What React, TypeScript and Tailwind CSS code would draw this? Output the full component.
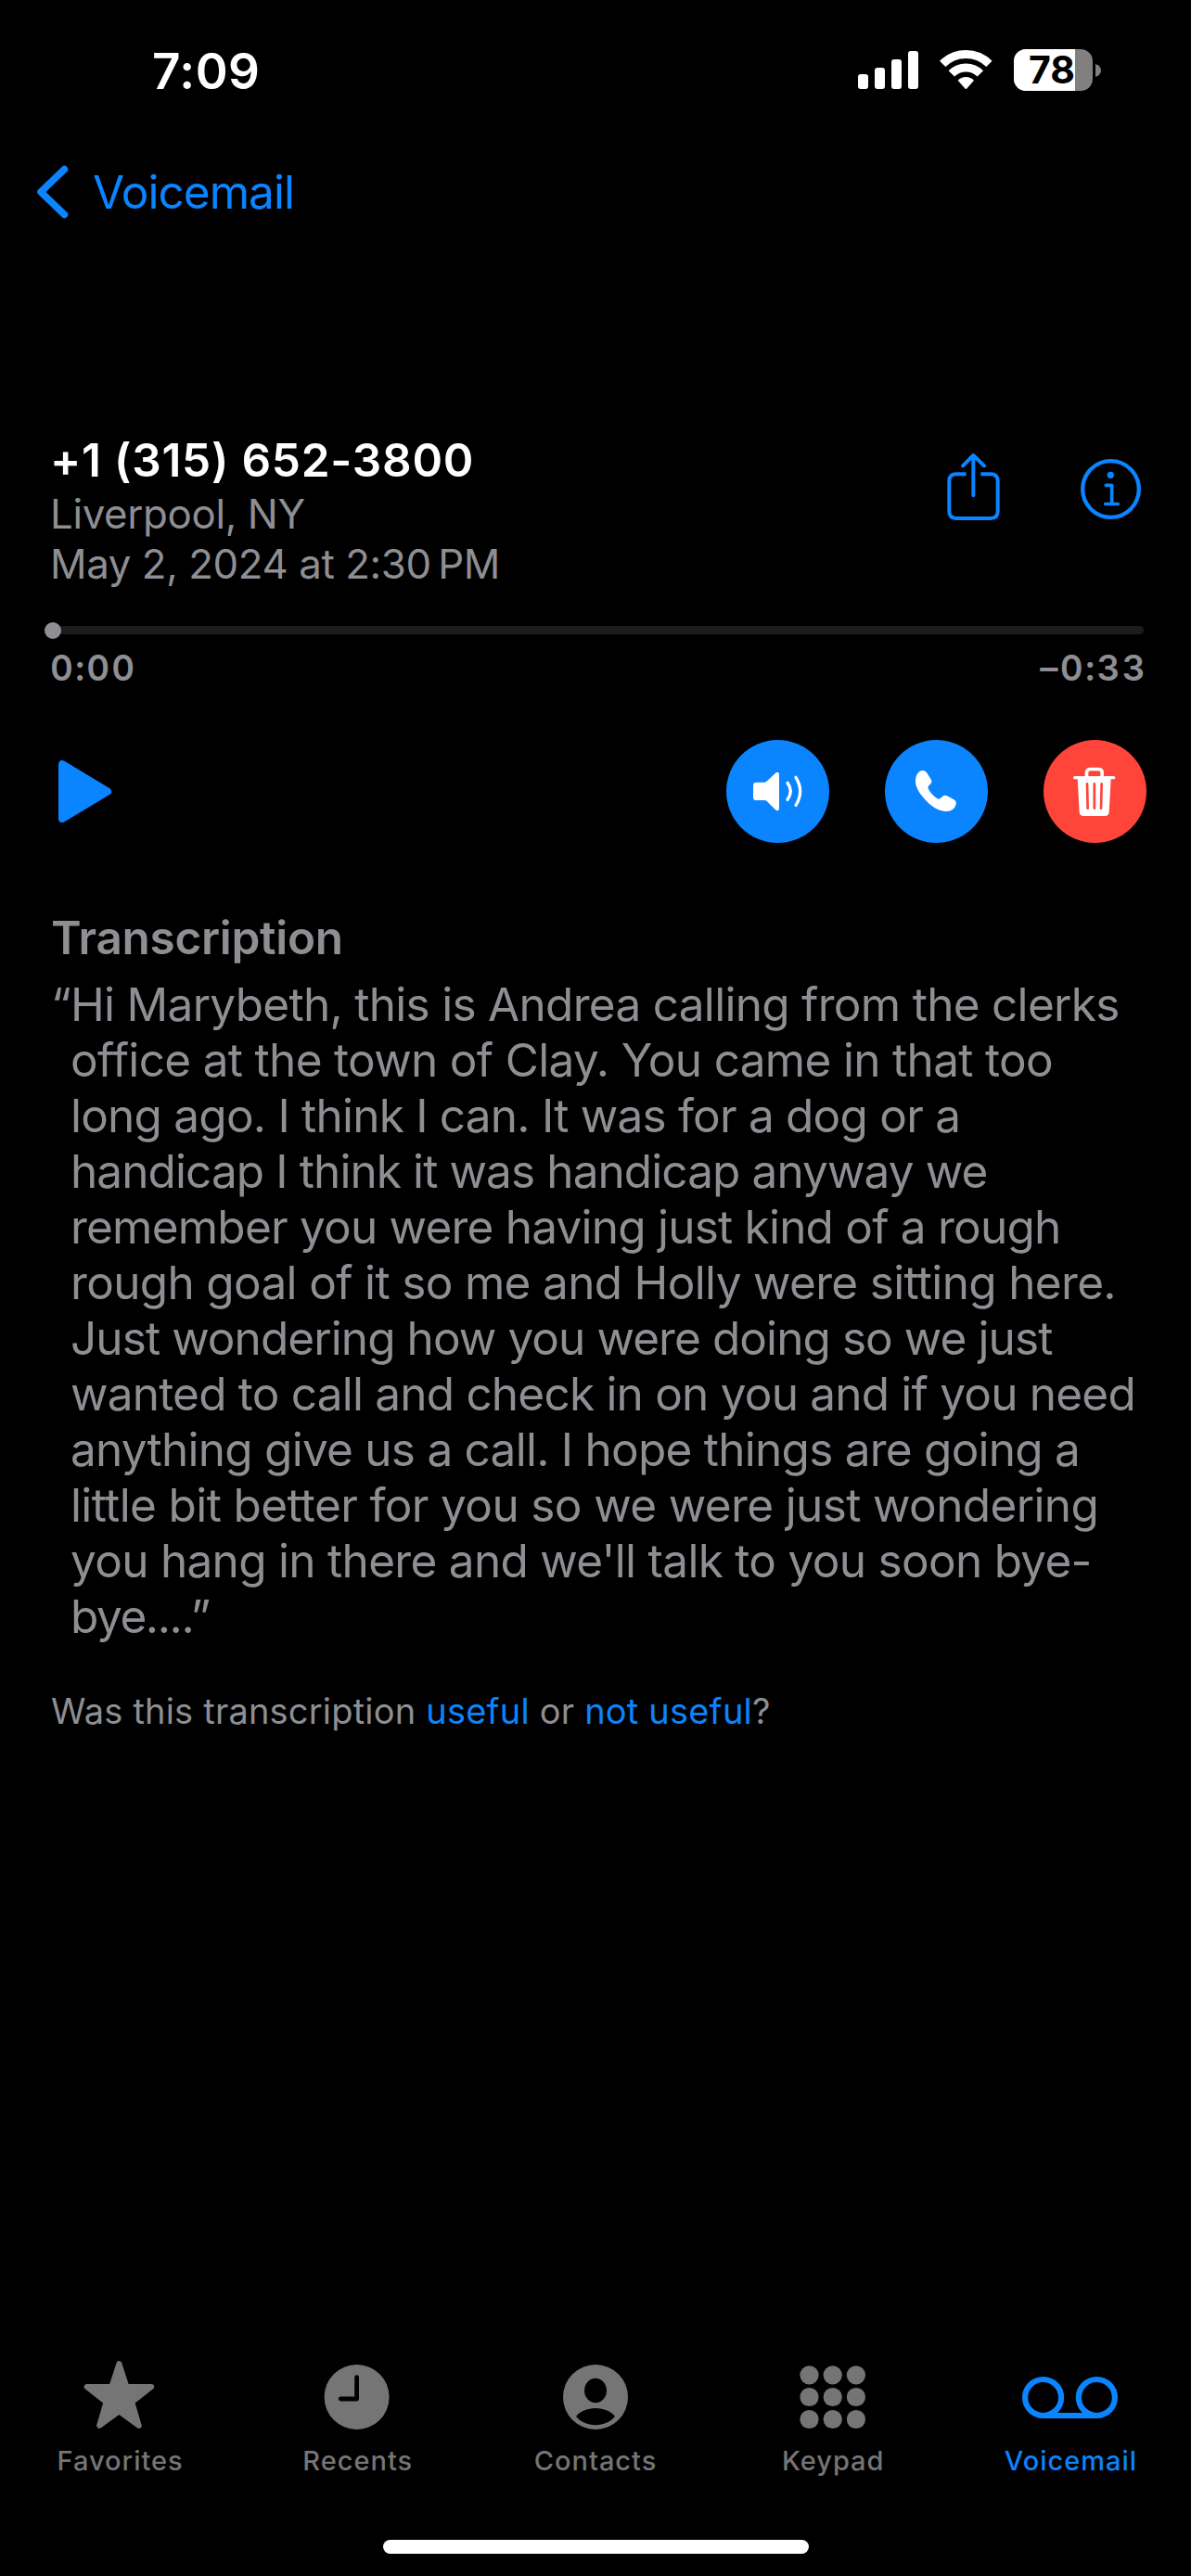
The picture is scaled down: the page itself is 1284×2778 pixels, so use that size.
import React from 'react';

type Line = { text: string; tracking: string };

const transcript: Line[] = [
  { text: 'Hi Marybeth, this is Andrea calling from the clerks', tracking: 'tracking-[-0.71px]' },
  { text: 'office at the town of Clay. You came in that too', tracking: 'tracking-[-0.68px]' },
  { text: 'long ago. I think I can. It was for a dog or a', tracking: 'tracking-[-0.78px]' },
  { text: 'handicap I think it was handicap anyway we', tracking: 'tracking-[-0.9px]' },
  { text: 'remember you were having just kind of a rough', tracking: 'tracking-[-0.78px]' },
  { text: 'rough goal of it so me and Holly were sitting here.', tracking: 'tracking-[-0.67px]' },
  { text: 'Just wondering how you were doing so we just', tracking: 'tracking-[-0.92px]' },
  { text: 'wanted to call and check in on you and if you need', tracking: 'tracking-[-0.79px]' },
  { text: 'anything give us a call. I hope things are going a', tracking: 'tracking-[-0.75px]' },
  { text: 'little bit better for you so we were just wondering', tracking: 'tracking-[-0.62px]' },
  { text: "you hang in there and we'll talk to you soon bye-", tracking: 'tracking-[-0.7px]' },
  { text: 'bye....”', tracking: 'tracking-[-1.4px]' },
];

const StarIcon = () => (
  <svg className="w-[110px] h-20" viewBox="0.6 0 110 80" fill="currentColor" stroke="currentColor" strokeWidth="6" strokeLinejoin="round">
    <path d="M55 5.2L63 30H89.8L68.8 46.3L76.3 71.8L55 56.3L33.7 71.8L41.2 46.3L20.2 30H47Z" />
  </svg>
);

const ClockIcon = () => (
  <svg className="w-[110px] h-20" viewBox="0.4 0 110 80" fill="none">
    <circle cx="55" cy="41" r="35" fill="currentColor" />
    <path d="M55 19.7V43H37.7" stroke="black" strokeWidth="4.8" strokeLinecap="round" strokeLinejoin="round" />
  </svg>
);

const ContactIcon = () => (
  <svg className="w-[110px] h-20" viewBox="0 0 110 80" fill="black">
    <circle cx="55" cy="41" r="35" fill="currentColor" />
    <ellipse cx="55" cy="34" rx="12" ry="13.2" />
    <path d="M34 62C38 56.5 46 53 55 53S72 56.5 76 62C71 68 63.5 71.2 55 71.2S39 68 34 62Z" />
  </svg>
);

const KeypadIcon = () => (
  <svg className="w-[110px] h-20" viewBox="0 0 110 80" fill="currentColor">
    {[17.3, 41, 65].map((cy) =>
      [29.5, 54.7, 79.9].map((cx) => <circle key={`${cx}-${cy}`} cx={cx} cy={cy} r="10.1" />)
    )}
  </svg>
);

const VoicemailIcon = () => (
  <svg className="w-[110px] h-20" viewBox="0 0 110 80" fill="none" stroke="currentColor" strokeWidth="6.2">
    <circle cx="25.6" cy="41.5" r="19.5" />
    <circle cx="83.4" cy="41.5" r="19.5" />
    <path d="M25.6 61H83.4" />
  </svg>
);

const tabs = [
  { label: 'Favorites', icon: StarIcon },
  { label: 'Recents', icon: ClockIcon },
  { label: 'Contacts', icon: ContactIcon },
  { label: 'Keypad', icon: KeypadIcon },
  { label: 'Voicemail', icon: VoicemailIcon, active: true },
];

const StatusBar: React.FC = () => (
  <header className="flex h-[154px] items-center justify-between pl-[164px] pr-[97px]">
    <span className="text-[53px] leading-none font-semibold tracking-[0.5px]">7:09</span>
    <div className="mb-[3px] flex items-center">
      <svg className="w-[65px] h-[45px]" viewBox="0 0 65 45" fill="currentColor">
        <rect x="0" y="27" width="11" height="16" rx="3" />
        <rect x="18" y="20" width="11" height="23" rx="3" />
        <rect x="36" y="11" width="11" height="32" rx="3" />
        <rect x="54" y="2" width="11" height="41" rx="3" />
      </svg>
      <svg className="ml-[22px] w-[59px] h-[45px]" viewBox="336 69 177 135" fill="none" stroke="currentColor">
        <path d="M348.7 116.7A106.5 106.5 0 0 1 499.3 116.7" strokeWidth="27" />
        <path d="M377.3 148.3A66 66 0 0 1 470.7 148.3" strokeWidth="27" />
        <path d="M398 170A37 37 0 0 1 450 170L426 197Q424 199 422 197Z" fill="currentColor" stroke="none" />
      </svg>
      <div className="ml-[22px] flex h-[45px] w-[85px] rounded-[13px] bg-[#808080]">
        <div className="flex w-[66px] items-center justify-end rounded-l-[13px] bg-white">
          <span className="text-[41px] leading-[45px] font-bold text-black">78</span>
        </div>
      </div>
      <svg className="ml-[3px] w-[6px] h-[14px]" viewBox="0 0 6 14" fill="#808080">
        <path d="M0 0Q6 2 6 7T0 14Z" />
      </svg>
    </div>
  </header>
);

const CallerInfo: React.FC = () => (
  <section className="flex items-start justify-between pr-[53px]">
    <div className="pl-[54px]">
      <h1 className="text-[49.5px] leading-[60px] font-semibold tracking-[0.75px]">+1 (315) 652-3800</h1>
      <p className="mt-[2px] text-[43.8px] leading-[54px] tracking-[-0.35px] text-[#8e8e93]">Liverpool, NY</p>
      <p className="text-[43.8px] leading-[54px] tracking-[-0.4px] text-[#8e8e93]">May 2, 2024 at 2:30{'\u2009'}PM</p>
    </div>
    <div className="flex items-start gap-[85px] pt-[22px] text-[#0a84ff]">
      <svg className="w-[59px] h-[75px]" viewBox="122 84 177 225" fill="none" stroke="currentColor" strokeWidth="12" strokeLinecap="round" strokeLinejoin="round">
        <path d="M187 153.500H155Q132 153.500 132 176V274Q132 297 155 297H266Q289 297 289 274V176Q289 153.500 266 153.500H234" strokeLinecap="butt" />
        <path d="M210 94V223M176 127L210 93L245 127" />
      </svg>
      <svg className="mt-[6px] w-[67px] h-[67px]" viewBox="552 102 201 201" fill="none" stroke="currentColor" strokeLinecap="round" strokeLinejoin="round">
        <circle cx="652.5" cy="202.500" r="91" strokeWidth="13" />
        <circle cx="652" cy="157" r="11" fill="currentColor" stroke="none" />
        <path d="M637 190H656V250M635 250.500H676" strokeWidth="11" />
      </svg>
    </div>
  </section>
);

const Scrubber: React.FC = () => (
  <section className="mt-[39px] pr-[51px] text-[#8e8e93]">
    <div className="relative ml-[57px] h-[9px] rounded-full bg-[#1c1c1c]">
      <div className="absolute top-[-4px] left-[-9px] h-[18px] w-[18px] rounded-full bg-[#8e8e93]" />
    </div>
    <div className="mt-[13px] flex justify-between pl-[54px] text-[38.5px] leading-[46px] font-semibold tabular-nums">
      <span className="tracking-[2px]">0:00</span>
      <span className="-mr-1 tracking-[2.3px]">–0:33</span>
    </div>
  </section>
);

const Controls: React.FC = () => (
  <section className="mt-[55px] flex items-center justify-between pl-[61px] pr-12">
    <svg className="w-[62px] h-[71px] text-[#0a84ff]" viewBox="0 0 62 71" fill="currentColor" stroke="currentColor" strokeWidth="8" strokeLinejoin="round">
      <path d="M6 6V65L55 35.500Z" />
    </svg>
    <div className="flex gap-[60px]">
      <button className="h-[111px] w-[111px] rounded-full bg-[#0a84ff]">
        <svg className="h-full w-full" viewBox="69 54 333 333" fill="none" stroke="white" strokeWidth="10" strokeLinecap="round" strokeLinejoin="round">
          <path d="M166 191H192Q197 191 201 187L228 161Q239 154 240 165V276Q239 287 228 280L201 253Q197 249 192 249H166Q156 249 156 239V201Q156 191 166 191Z" fill="white" stroke="none" />
          <path d="M267 193Q287 220 267 247" />
          <path d="M294 175Q322 220 294 265" />
        </svg>
      </button>
      <button className="h-[111px] w-[111px] rounded-full bg-[#0a84ff]">
        <svg className="h-full w-full" viewBox="582 54 333 333" fill="white">
          <path d="M681 190C680 171 689 154 703 153C710 152 715 156 719 162L730 180C735 188 733 193 728 198L724 202C720 207 721 210 724 215C732 228 741 236 751 243C756 246 759 246 764 241L768 237C773 232 778 232 786 236L804 246C811 250 813 255 812 261C809 276 796 286 778 285C762 284 742 275 722 257C699 236 682 211 681 190Z" />
        </svg>
      </button>
      <button className="h-[111px] w-[111px] rounded-full bg-[#ff453a]">
        <svg className="h-full w-full" viewBox="1095 54 333 333" fill="none" stroke="white" strokeLinecap="round">
          <path d="M1196 176H1322" strokeWidth="10" />
          <path d="M1234.500 174V160Q1234.500 148.500 1246 148.500H1273Q1284.500 148.500 1284.500 160V174" strokeWidth="11" />
          <path d="M1205 178H1313L1307 287Q1306 300 1293 300H1225Q1212 300 1211 287Z" fill="white" stroke="none" />
          <path d="M1236 196L1238 275M1259.500 196V275M1283 196L1281 275" stroke="#ff453a" strokeWidth="8" />
        </svg>
      </button>
    </div>
  </section>
);

const Transcription: React.FC = () => (
  <section className="mt-[72px] pl-[55px] text-[#8e8e93]">
    <h2 className="text-[49.5px] leading-[60px] font-semibold tracking-[-0.3px]">Transcription</h2>
    <div className="mt-3 flex text-[49.5px] leading-[60px] whitespace-nowrap">
      <span className="w-[21px]">“</span>
      <p>
        {transcript.map((line) => (
          <span key={line.text} className={`block ${line.tracking}`}>{line.text}</span>
        ))}
      </p>
    </div>
    <p className="mt-[49px] text-[38px] leading-[46px] tracking-[0.2px]">
      Was this transcription <a className="text-[#0a84ff]">useful</a> or <a className="text-[#0a84ff]">not useful</a>?
    </p>
  </section>
);

const App: React.FC = () => {
  return (
    <div className="flex h-[2778px] w-[1284px] flex-col bg-black font-['Inter',sans-serif] text-white">
      <StatusBar />
      <nav className="flex h-[106px] items-center pl-[38px] text-[#0a84ff]">
        <svg className="w-[38px] h-[60px]" viewBox="0 0 38 60" fill="none" stroke="currentColor" strokeWidth="7.5" strokeLinecap="round" strokeLinejoin="round">
          <path d="M31.500 5.500L6 30L31.500 54.500" />
        </svg>
        <span className="ml-6 text-[49.5px] leading-[60px] tracking-[-0.95px]">Voicemail</span>
      </nav>

      <main className="pt-[206px]">
        <CallerInfo />
        <Scrubber />
        <Controls />
        <Transcription />
      </main>

      {/* Tab bar */}
      <footer className="mt-auto flex flex-col items-center pb-6">
        <div className="flex w-full pl-px pr-[2px]">
          {tabs.map(({ label, icon: Icon, active }) => (
            <div key={label} className={`flex flex-1 flex-col items-center ${active ? 'text-[#0a84ff]' : 'text-[#757575]'}`}>
              <Icon />
              <span className="mt-3 pl-px text-[29px] leading-9 font-medium tracking-[1px]">{label}</span>
            </div>
          ))}
        </div>
        <div className="mt-[67px] h-[15px] w-[459px] rounded-full bg-white" />
      </footer>
    </div>
  );
};

export default App;
